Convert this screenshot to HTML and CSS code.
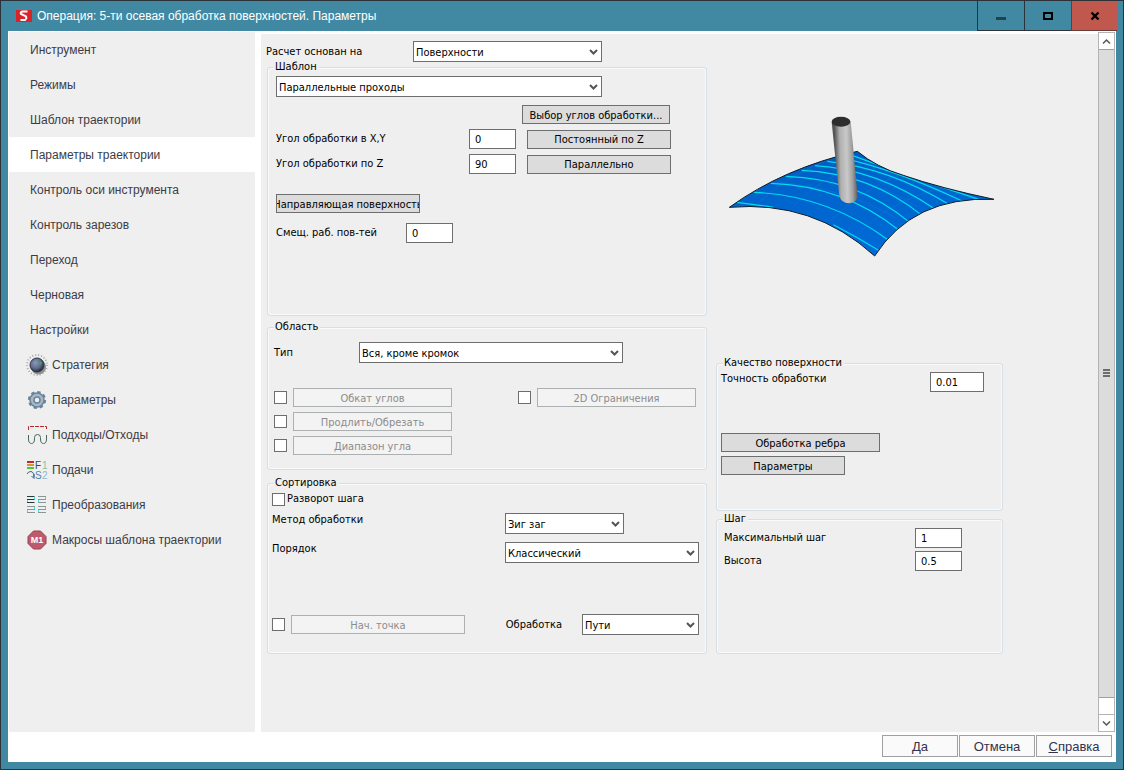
FILE: index.html
```html
<!DOCTYPE html>
<html lang="ru">
  <head>
    <meta charset="UTF-8" />
    <meta name="viewport" content="width=device-width, initial-scale=1.0">
    <title>Операция: 5-ти осевая обработка поверхностей. Параметры</title>
    <link rel="stylesheet" href="styles.css">
  </head>
  <body>
    <div class="window">
      <!-- Заголовок окна -->
      <header class="titlebar">
        <svg class="app-icon" width="16" height="12" viewBox="0 0 16 12">
          <rect width="16" height="12" fill="#d9222a"/>
          <path d="M11.500 1.500H6.500Q4 2 5 4L9.500 6Q11.500 8 9 10H4.500" fill="none" stroke="#fff" stroke-width="2"/>
        </svg>
        <h1 class="title">Операция: 5-ти осевая обработка поверхностей. Параметры</h1>
        <div class="window-buttons">
          <button class="win-btn" aria-label="Свернуть">
            <svg width="12" height="12" viewBox="0 0 12 12"><rect x="1" y="7" width="10" height="3" fill="#21434f"/></svg>
          </button>
          <button class="win-btn" aria-label="Развернуть">
            <svg width="12" height="12" viewBox="0 0 12 12"><rect x="2" y="3" width="8" height="6" fill="none" stroke="#000" stroke-width="2"/></svg>
          </button>
          <button class="win-btn win-close" aria-label="Закрыть">
            <svg width="12" height="12" viewBox="0 0 12 12"><path d="M2.500 2.500L9.500 9.500M9.500 2.500L2.500 9.500" stroke="#000" stroke-width="2.400"/></svg>
          </button>
        </div>
      </header>

      <div class="content">
        <!-- Меню слева -->
        <nav class="sidebar">
          <a class="nav-item" href="#">Инструмент</a>
          <a class="nav-item" href="#">Режимы</a>
          <a class="nav-item" href="#">Шаблон траектории</a>
          <a class="nav-item active" href="#">Параметры траектории</a>
          <a class="nav-item" href="#">Контроль оси инструмента</a>
          <a class="nav-item" href="#">Контроль зарезов</a>
          <a class="nav-item" href="#">Переход</a>
          <a class="nav-item" href="#">Черновая</a>
          <a class="nav-item" href="#">Настройки</a>
          <a class="nav-item with-icon" href="#">
            <svg width="22" height="22" viewBox="0 0 22 22">
              <defs>
                <radialGradient id="knob" cx="40%" cy="35%" r="65%">
                  <stop offset="0%" stop-color="#8c98b8"/>
                  <stop offset="60%" stop-color="#5e6b8c"/>
                  <stop offset="100%" stop-color="#232a3a"/>
                </radialGradient>
              </defs>
              <circle cx="11" cy="11" r="10" fill="none" stroke="#a9a9a9" stroke-width="2" stroke-dasharray="1 2"/>
              <circle cx="12.500" cy="13" r="7.500" fill="#8f8f8f"/>
              <circle cx="11" cy="11" r="7" fill="url(#knob)" stroke="#2d3445"/>
              <circle cx="14.500" cy="9" r="1.200" fill="#3fae3a"/>
            </svg>
            Стратегия
          </a>
          <a class="nav-item with-icon" href="#">
            <svg width="22" height="22" viewBox="0 0 22 22">
              <circle cx="11" cy="11" r="7.800" fill="none" stroke="#6b8499" stroke-width="2.600" stroke-dasharray="3.300 2.826"/>
              <circle cx="11" cy="11" r="7" fill="#a5b8c7" stroke="#6b8499" stroke-width="1.500"/>
              <circle cx="11" cy="11" r="3" fill="#efefef" stroke="#6b8499" stroke-width="1.500"/>
            </svg>
            Параметры
          </a>
          <a class="nav-item with-icon" href="#">
            <svg width="22" height="22" viewBox="0 0 22 22">
              <path d="M2.500 6V2.500H20.500V6" fill="none" stroke="#b3282d" stroke-dasharray="4 1"/>
              <path d="M2.500 11V15Q2.500 19.500 5.500 19.500Q8.500 19.500 8.500 15V13.500Q8.500 10.500 11.500 10.500Q14.500 10.500 14.500 13.500V15Q14.500 19.500 17.500 19.500Q20.500 19.500 20.500 15V11" fill="none" stroke="#47695a"/>
            </svg>
            Подходы/Отходы
          </a>
          <a class="nav-item with-icon" href="#">
            <svg width="22" height="22" viewBox="0 0 22 22">
              <rect x="1" y="2" width="7" height="2" fill="#c1272d"/>
              <rect x="1" y="5" width="7" height="2" fill="#d39a2a"/>
              <rect x="1" y="8" width="7" height="2" fill="#4ccb2a"/>
              <path d="M1 15Q2 12.500 5 12.500Q8 13 8 18M5.500 17L8 19.500V15" fill="none" stroke="#35688c"/>
              <text x="9" y="10" class="feed-text" fill="#2f5040">F</text>
              <text x="16" y="10" class="feed-text" fill="#8bbfa0">1</text>
              <text x="9" y="20" class="feed-text" fill="#4a86b5">S</text>
              <text x="16" y="20" class="feed-text" fill="#94b5d6">2</text>
            </svg>
            Подачи
          </a>
          <a class="nav-item with-icon" href="#">
            <svg width="22" height="22" viewBox="0 0 22 22">
              <path d="M1 2.500H8.500M1 5.500H8.500M1 8.500H8.500" stroke="#203c3c" stroke-width="1"/>
              <path d="M12 2.500H20M12 5.500H20M12 8.500H20M1 12.500H9M1 15.500H9M1 18.500H9M12 12.500H20M12 15.500H20M12 18.500H20" stroke="#8c9494"/>
              <path d="M8.500 3V5M1.500 6V8M19.500 3V5M12.500 6V8M8.500 13V15M1.500 16V18M19.500 13V15M12.500 16V18" stroke="#31e6e6"/>
            </svg>
            Преобразования
          </a>
          <a class="nav-item with-icon" href="#">
            <svg width="22" height="22" viewBox="0 0 22 22">
              <path d="M7.500 2H14.500L20 7.500V14.500L14.500 20H7.500L2 14.500V7.500Z" fill="#bd5a6b" stroke="#9c4152"/>
              <text x="11" y="14" class="macro-text">M1</text>
            </svg>
            Макросы шаблона траектории
          </a>
        </nav>

        <!-- Параметры операции -->
        <main class="panel">
          <div class="column column-left">
            <div class="row base-row">
              <label for="base">Расчет основан на</label>
              <select id="base"><option>Поверхности</option></select>
            </div>

            <fieldset class="group group-pattern">
              <legend>Шаблон</legend>
              <div class="group-body">
                <select class="pattern-select" aria-label="Шаблон"><option>Параллельные проходы</option></select>
                <div class="angles">
                  <button class="btn angle-choice">Выбор углов обработки...</button>
                  <label for="angle-xy">Угол обработки в X,Y</label>
                  <input type="text" id="angle-xy" value="0">
                  <button class="btn">Постоянный по Z</button>
                  <label for="angle-z">Угол обработки по Z</label>
                  <input type="text" id="angle-z" value="90">
                  <button class="btn">Параллельно</button>
                </div>
                <button class="btn guide-btn">Направляющая поверхность</button>
                <div class="row offset-row">
                  <label for="offset">Смещ. раб. пов-тей</label>
                  <input type="text" id="offset" value="0">
                </div>
              </div>
            </fieldset>

            <fieldset class="group group-area">
              <legend>Область</legend>
              <div class="group-body">
                <div class="row type-row">
                  <label for="type">Тип</label>
                  <select id="type"><option>Вся, кроме кромок</option></select>
                </div>
                <div class="limits">
                  <div class="limit-list">
                    <div class="check-row">
                      <input type="checkbox" aria-label="Обкат углов">
                      <button class="btn" disabled>Обкат углов</button>
                    </div>
                    <div class="check-row">
                      <input type="checkbox" aria-label="Продлить/Обрезать">
                      <button class="btn" disabled>Продлить/Обрезать</button>
                    </div>
                    <div class="check-row">
                      <input type="checkbox" aria-label="Диапазон угла">
                      <button class="btn" disabled>Диапазон угла</button>
                    </div>
                  </div>
                  <div class="check-row">
                    <input type="checkbox" aria-label="2D Ограничения">
                    <button class="btn" disabled>2D Ограничения</button>
                  </div>
                </div>
              </div>
            </fieldset>

            <fieldset class="group group-sort">
              <legend>Сортировка</legend>
              <div class="group-body">
                <div class="flip-row">
                  <input type="checkbox" id="flip">
                  <label for="flip">Разворот шага</label>
                </div>
                <div class="row method-row">
                  <label for="method">Метод обработки</label>
                  <select id="method"><option>Зиг заг</option></select>
                </div>
                <div class="row order-row">
                  <label for="order">Порядок</label>
                  <select id="order"><option>Классический</option></select>
                </div>
                <div class="start-row">
                  <input type="checkbox" aria-label="Нач. точка">
                  <button class="btn start-btn" disabled>Нач. точка</button>
                  <label for="machining">Обработка</label>
                  <select id="machining"><option>Пути</option></select>
                </div>
              </div>
            </fieldset>
          </div>

          <div class="column column-right">
            <div class="preview">
              <svg width="268" height="144" viewBox="54 75 804 432">
                <defs>
                  <linearGradient id="tool" x1="0" x2="1" y1="0.080" y2="0">
                    <stop offset="0.100" stop-color="#555"/>
                    <stop offset="0.300" stop-color="#b0b0b0"/>
                    <stop offset="0.550" stop-color="#c9c9c9"/>
                    <stop offset="0.750" stop-color="#a0a0a0"/>
                    <stop offset="1" stop-color="#404040"/>
                  </linearGradient>
                  <linearGradient id="surf" x1="0" x2="0.300" y1="0" y2="1">
                    <stop offset="0" stop-color="#0058b8"/>
                    <stop offset="0.400" stop-color="#0064cc"/>
                    <stop offset="1" stop-color="#006ad6"/>
                  </linearGradient>
                  <clipPath id="surfClip">
                    <path d="M58 352Q220 235 442 184Q500 232 580 256Q690 294 852 328Q610 318 494 498Q310 330 58 352Z"/>
                  </clipPath>
                </defs>
                <path d="M58 352Q220 235 442 184Q500 232 580 256Q690 294 852 328Q610 318 494 498Q310 330 58 352Z" fill="url(#surf)"/>
                <!-- Сетка поверхности -->
                <g clip-path="url(#surfClip)" fill="none" stroke="#1b75da" stroke-width="1.500">
                  <path d="M145 338Q240 250 380 200M250 350Q320 270 470 215M360 395Q450 300 570 255M430 450Q530 330 700 295"/>
                  <path d="M180 275Q400 290 560 385M280 240Q480 260 620 350"/>
                </g>
                <!-- Проходы -->
                <g clip-path="url(#surfClip)" fill="none" stroke="#00dcf0" stroke-width="3.500">
                  <path d="M80 337Q135 343 190 352M370 404Q440 440 508 482"/>
                  <path d="M132 307Q350 315 535 450"/>
                  <path d="M182 280Q400 287 566 420"/>
                  <path d="M228 259Q440 265 600 398"/>
                  <path d="M275 241Q480 250 636 376"/>
                  <path d="M315 227Q500 238 676 358"/>
                  <path d="M352 214Q540 235 716 343"/>
                  <path d="M392 203Q560 240 758 334"/>
                  <path d="M420 194Q600 260 806 328"/>
                </g>
                <path d="M58 352Q220 235 442 184Q500 232 580 256Q690 294 852 328Q610 318 494 498Q310 330 58 352Z" fill="none" stroke="#111c28" stroke-width="3"/>
                <!-- Фреза -->
                <path d="M365 97L388 318Q394 340 417 340Q442 338 443 316L422 94Z" fill="url(#tool)"/>
                <ellipse cx="393" cy="95" rx="28" ry="15" fill="#2d2d2d"/>
              </svg>
            </div>

            <fieldset class="group group-quality">
              <legend>Качество поверхности</legend>
              <div class="group-body">
                <div class="row quality-row">
                  <label for="tolerance">Точность обработки</label>
                  <input type="text" id="tolerance" value="0.01">
                </div>
                <div class="quality-buttons">
                  <button class="btn edge-btn">Обработка ребра</button>
                  <button class="btn params-btn">Параметры</button>
                </div>
              </div>
            </fieldset>

            <fieldset class="group group-step">
              <legend>Шаг</legend>
              <div class="group-body">
                <div class="row step-row">
                  <label for="max-step">Максимальный шаг</label>
                  <input type="text" id="max-step" value="1">
                </div>
                <div class="row step-row">
                  <label for="height">Высота</label>
                  <input type="text" id="height" value="0.5">
                </div>
              </div>
            </fieldset>
          </div>
        </main>

        <!-- Прокрутка -->
        <div class="scrollbar">
          <button class="scroll-btn" aria-label="Вверх">
            <svg width="9" height="7" viewBox="0 0 9 7"><path d="M1 5.500L4.500 2L8 5.500" fill="none" stroke="#555" stroke-width="1.500"/></svg>
          </button>
          <div class="scroll-thumb">
            <svg width="7" height="9" viewBox="0 0 7 9"><path d="M0 1H7M0 4H7M0 7H7" stroke="#6d6d6d" stroke-width="2"/></svg>
          </div>
          <div class="scroll-track"></div>
          <button class="scroll-btn" aria-label="Вниз">
            <svg width="9" height="7" viewBox="0 0 9 7"><path d="M1 1.500L4.500 5L8 1.500" fill="none" stroke="#555" stroke-width="1.500"/></svg>
          </button>
        </div>
      </div>

      <footer class="footer">
        <button class="dialog-btn"><u>Д</u>а</button>
        <button class="dialog-btn">Отмена</button>
        <button class="dialog-btn"><u>С</u>правка</button>
      </footer>
    </div>
  </body>
</html>
```

FILE: styles.css
```css
* {
  box-sizing: border-box;
}

body {
  margin: 0;
  font-family: "DejaVu Sans Condensed", "DejaVu Sans", Tahoma, sans-serif;
  font-size: 11px;
  line-height: 14px;
  color: #000;
}

button,
input,
select {
  font: inherit;
  color: inherit;
  margin: 0;
  border-radius: 0;
}

.window {
  display: flex;
  flex-direction: column;
  min-height: 100vh;
  padding: 0 7px 7px;
  border: 1px solid #2b3338;
  background: #4189a2;
}

/* Заголовок */
.titlebar {
  display: flex;
  align-items: center;
  height: 30px;
  padding-left: 8px;
  margin-right: -1px;
}

.title {
  flex: 1;
  margin: 0 0 0 5px;
  font-family: "Liberation Sans", Arial, sans-serif;
  font-size: 12px;
  font-weight: normal;
  color: #fff;
}

.window-buttons {
  display: flex;
  align-self: stretch;
}

.win-btn {
  display: flex;
  align-items: center;
  justify-content: center;
  width: 47px;
  padding: 0;
  border: solid #2b3338;
  border-width: 0 0 1px 1px;
  background: transparent;
}

.win-close {
  width: 46px;
  border-color: #6b3a3a;
  background: #c1584d;
}

.content {
  display: flex;
  flex: 1;
  padding: 1px 1px 0;
  background: #fff;
}

/* Меню */
.sidebar {
  flex: none;
  width: 246px;
  background: #efefef;
}

.nav-item {
  display: flex;
  align-items: center;
  gap: 4px;
  height: 35px;
  padding-left: 21px;
  font-family: "Liberation Sans", Arial, sans-serif;
  font-size: 12px;
  color: #3c3c46;
  text-decoration: none;
}

.nav-item.with-icon {
  padding-left: 17px;
}

.nav-item.active {
  background: #fff;
}

.feed-text {
  font-family: "Liberation Sans", sans-serif;
  font-size: 10px;
}

.macro-text {
  font-family: "Liberation Sans", sans-serif;
  font-size: 9px;
  font-weight: bold;
  fill: #fff;
  text-anchor: middle;
}

/* Основная область */
.panel {
  display: grid;
  flex: 1;
  grid-template-columns: 440fr 287fr;
  gap: 9px;
  margin: 2px 0 0 6px;
  padding: 7px 95px 0 6px;
  background: #efefef;
}

.column {
  display: flex;
  flex-direction: column;
  min-width: 0;
}

.row {
  display: flex;
  align-items: center;
}

.row label {
  flex: none;
}

.group {
  min-width: 0;
  margin: 0;
  padding: 0;
  border: 1px solid #d5dfe5;
  border-radius: 3px;
  box-shadow: inset 0 0 0 1px #fafafa;
}

.group legend {
  margin-left: 6px;
  padding: 0 2px 0 1px;
  line-height: 10px;
  background: #efefef;
}

input[type="text"] {
  width: 47px;
  height: 20px;
  padding: 0 5px;
  border: 1px solid #6e6e6e;
  background: #fff;
}

input[type="checkbox"] {
  flex: none;
  appearance: none;
  width: 13px;
  height: 13px;
  border: 1px solid #6e6e6e;
  background: #fff;
}

input[type="checkbox"]:checked {
  background: #6e6e6e;
}

select {
  appearance: none;
  height: 21px;
  padding: 2px 18px 0 2px;
  border: 1px solid #6e6e6e;
  background: #fff url("data:image/svg+xml,%3Csvg xmlns='http://www.w3.org/2000/svg' width='9' height='6'%3E%3Cpath d='M1 1L4.5 4.500L8 1' fill='none' stroke='%23555' stroke-width='2'/%3E%3C/svg%3E") no-repeat right 3px center;
}

.btn {
  display: block;
  height: 19px;
  padding: 2px 2px 0;
  overflow: hidden;
  border: 1px solid #6e6e6e;
  background: #dcdcdc;
  white-space: nowrap;
}

.btn:disabled {
  border-color: #acb0b1;
  background: #f3f3f3;
  color: #8c8c8c;
}

.base-row label {
  width: 147px;
  margin-left: -1px;
}

.base-row select {
  width: 189px;
}

/* Шаблон */
.group-pattern {
  min-height: 254px;
}

.group-pattern .group-body {
  padding: 4px 8px;
}

.pattern-select {
  display: block;
  width: 326px;
}

.angles {
  display: grid;
  grid-template-columns: 193px 47px 144px;
  align-items: center;
  row-gap: 5px;
  margin-top: 8px;
}

.angles .btn {
  margin-left: 11px;
  width: 144px;
}

.angles .angle-choice {
  grid-column: 1 / -1;
  justify-self: end;
  width: 148px;
  margin-right: -10px;
}

.guide-btn {
  display: flex;
  align-items: center;
  justify-content: center;
  width: 144px;
  margin-top: 20px;
}

.offset-row {
  margin-top: 10px;
}

.offset-row label {
  width: 130px;
}

/* Область */
.group-area {
  min-height: 148px;
  margin-top: 6px;
}

.group-area .group-body {
  padding: 10px 10px 14px 6px;
}

.type-row label {
  width: 85px;
}

.type-row select {
  width: 264px;
}

.limits {
  display: flex;
  align-items: flex-start;
  justify-content: space-between;
  margin-top: 25px;
}

.limit-list {
  display: flex;
  flex-direction: column;
  gap: 5px;
}

.check-row {
  display: flex;
  align-items: center;
  gap: 6px;
}

.check-row .btn {
  width: 159px;
}

/* Сортировка */
.group-sort {
  min-height: 176px;
  margin-top: 8px;
}

.group-sort .group-body {
  padding: 4px 7px 17px 4px;
}

.flip-row {
  display: flex;
  align-items: center;
  gap: 2px;
}

.method-row,
.order-row {
  align-items: flex-start;
  margin-top: 7px;
}

.order-row {
  margin-top: 8px;
}

.method-row label,
.order-row label {
  width: 233px;
}

.method-row select {
  width: 119px;
}

.order-row select {
  width: 194px;
}

.start-row {
  display: flex;
  align-items: center;
  gap: 6px;
  margin-top: 51px;
}

.start-btn {
  width: 174px;
}

.start-row label {
  margin-left: auto;
  padding-right: 14px;
}

.start-row select {
  width: 117px;
}

/* Изображение операции */
.preview {
  display: flex;
  justify-content: center;
  height: 317px;
  padding: 74px 0 0 4px;
}

.group-quality {
  min-height: 153px;
}

.group-quality .group-body {
  padding: 4px 18px 6px 4px;
}

.quality-row,
.step-row {
  justify-content: space-between;
}

.quality-row {
  align-items: flex-start;
}

.quality-row input {
  width: 54px;
}

.quality-buttons {
  display: flex;
  flex-direction: column;
  gap: 4px;
  margin-top: 41px;
}

.edge-btn {
  width: 159px;
}

.params-btn {
  width: 124px;
}

.group-step {
  min-height: 140px;
  margin-top: 3px;
}

.group-step .group-body {
  display: flex;
  flex-direction: column;
  gap: 3px;
  padding: 4px 40px 6px 7px;
}

/* Прокрутка */
.scrollbar {
  display: flex;
  flex: none;
  flex-direction: column;
  width: 17px;
  border: 1px solid #b4b4b4;
  background: #fff;
}

.scroll-btn,
.scroll-thumb {
  display: flex;
  align-items: center;
  justify-content: center;
}

.scroll-btn {
  height: 16px;
  padding: 0;
  border: 0;
  background: #fff;
}

.scroll-thumb {
  flex: 1;
  border: solid #a0a0a0;
  border-width: 1px 0;
  background: #dcdcdc;
}

.scroll-track {
  height: 17px;
  border-bottom: 1px solid #b4b4b4;
}

/* Кнопки диалога */
.footer {
  display: flex;
  justify-content: flex-end;
  gap: 1px;
  height: 30px;
  padding: 3px 4px 5px;
  background: #fff;
}

.dialog-btn {
  width: 76px;
  padding: 2px 0 0;
  border: 1px solid #a0a0a0;
  background: #fafafa;
  font-family: "Liberation Sans", Arial, sans-serif;
  font-size: 13px;
  color: #33334d;
}
```
